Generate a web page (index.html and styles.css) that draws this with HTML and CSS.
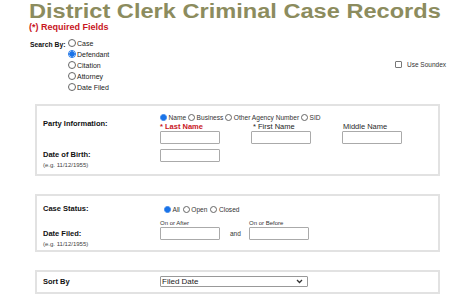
FILE: index.html
```html
<!DOCTYPE html>
<html>
<head>
<meta charset="utf-8">
<link rel="stylesheet" href="styles.css">
</head>
<body>
<div class="page">
  <h1 class="title"><span class="title-text">District Clerk Criminal Case Records</span></h1>
  <div class="req">(*) Required Fields</div>
  <div class="search">
    <div class="search-label">Search By:</div>
    <div class="search-opts">
      <label class="opt"><span class="radio"></span>Case</label>
      <label class="opt"><span class="radio on"></span>Defendant</label>
      <label class="opt"><span class="radio"></span>Citation</label>
      <label class="opt"><span class="radio"></span>Attorney</label>
      <label class="opt"><span class="radio"></span>Date Filed</label>
    </div>
    <label class="soundex"><span class="check"></span>Use Soundex</label>
  </div>

  <div class="box box1">
    <div class="row row-party">
      <div class="lbl">Party Information:</div>
      <div class="fields">
        <div class="radios">
          <label class="ropt"><span class="radio on"></span>Name</label>
          <label class="ropt"><span class="radio"></span>Business</label>
          <label class="ropt"><span class="radio"></span>Other Agency Number</label>
          <label class="ropt"><span class="radio"></span>SID</label>
        </div>
        <div class="names">
          <div class="fld f-last"><div class="flbl red">* Last Name</div><div class="inp"></div></div>
          <div class="fld f-first"><div class="flbl">* First Name</div><div class="inp"></div></div>
          <div class="fld f-mid"><div class="flbl"><span class="plain">Middle Name</span></div><div class="inp"></div></div>
        </div>
      </div>
    </div>
    <div class="row row-dob">
      <div class="lbl">Date of Birth:<div class="hint">(e.g. 11/12/1955)</div></div>
      <div class="fields"><div class="inp"></div></div>
    </div>
  </div>

  <div class="box box2">
    <div class="row row-status">
      <div class="lbl">Case Status:</div>
      <div class="radios">
        <label class="ropt"><span class="radio on"></span>All</label>
        <label class="ropt"><span class="radio"></span>Open</label>
        <label class="ropt"><span class="radio"></span>Closed</label>
      </div>
    </div>
    <div class="row row-filed">
      <div class="lbl">Date Filed:<div class="hint">(e.g. 11/12/1955)</div></div>
      <div class="dates">
        <div class="fld"><div class="slbl">On or After</div><div class="inp"></div></div>
        <div class="and">and</div>
        <div class="fld"><div class="slbl">On or Before</div><div class="inp"></div></div>
      </div>
    </div>
  </div>

  <div class="box box3">
    <div class="row row-sort">
      <div class="lbl">Sort By</div>
      <div class="select"><span>Filed Date</span>
        <svg width="7" height="5" viewBox="0 0 7 5"><path d="M1 1 L3.5 3.5 L6 1" fill="none" stroke="#333" stroke-width="1.3"/></svg>
      </div>
    </div>
  </div>
</div>
</body>
</html>
```

FILE: styles.css
```css
* { box-sizing: border-box; }
body {
  margin: 0;
  font-family: "Liberation Sans", Arial, sans-serif;
  color: #111;
  background: #fff;
  overflow: hidden;
}
.page { padding: 0 0 0 29px; width: 474px; }
.title {
  margin: 0;
  height: 22px;
  font-size: 20px;
  line-height: 22px;
  font-weight: bold;
  color: #8c8c5e;
  white-space: nowrap;
}
.title-text {
  display: inline-block;
  transform: scaleX(1.18);
  transform-origin: left center;
}
.req {
  margin-top: -1px;
  font-size: 9px;
  line-height: 12px;
  font-weight: bold;
  color: #c8161e;
}
.search {
  display: flex;
  margin-top: 5px;
  height: 65px;
  position: relative;
}
.search-label {
  width: 39px;
  padding-left: 1px;
  font-size: 6.8px;
  font-weight: bold;
  line-height: 11px;
  padding-top: 1px;
}
.search-opts { display: flex; flex-direction: column; }
.opt {
  display: flex;
  align-items: center;
  height: 11px;
  font-size: 7px;
  color: #222;
}
.radio {
  display: inline-block;
  width: 8px;
  height: 8px;
  border: 1px solid #666;
  border-radius: 50%;
  margin-right: 1px;
  background: #fff;
  flex: none;
}
.radio.on {
  border-color: #1a73e8;
  background: radial-gradient(circle, #1a73e8 0 2.5px, #fff 2.8px 100%);
}
.opt .radio { margin-right: 1px; position: relative; top: -1px; }
.soundex {
  position: absolute;
  left: 366px;
  top: 23px;
  display: flex;
  align-items: center;
  font-size: 6.5px;
  color: #333;
}
.check {
  width: 7px;
  height: 7px;
  border: 1px solid #777;
  border-radius: 1px;
  margin-right: 5px;
}
.box {
  width: 405px;
  margin-left: 6px;
  border: 2px solid #e2e2e2;
  padding: 0 0 0 6px;
}
.box1 { margin-top: 1px; height: 72px; }
.box2 { margin-top: 18px; height: 58px; }
.box3 { margin-top: 18px; height: 24px; }
.row { display: flex; }
.lbl {
  width: 117px;
  flex: none;
  font-size: 7.5px;
  font-weight: bold;
  line-height: 10px;
  color: #111;
}
.hint {
  font-size: 6px;
  font-weight: normal;
  color: #444;
  line-height: 10px;
}
.row-party { padding-top: 7px; }
.row-party .lbl { padding-top: 6px; }
.radios { display: flex; align-items: center; height: 9px; }
.ropt {
  display: flex;
  align-items: center;
  font-size: 6.6px;
  color: #333;
  margin-right: 2px;
}
.ropt .radio { width: 7px; height: 7px; margin-right: 1.5px; }
.names { display: flex; }
.fld { display: flex; flex-direction: column; }
.flbl {
  font-size: 7.5px;
  line-height: 9px;
  height: 9px;
  color: #222222;
}
.flbl.red { color: #c8161e; font-weight: bold; }
.f-first .flbl { padding-left: 2px; }
.plain { color: #2a2a2a; }
.inp {
  width: 60px;
  height: 13px;
  border: 1px solid #aaa;
  border-radius: 1px;
  background: #fff;
}
.f-last { margin-right: 31px; }
.f-first { margin-right: 31px; }
.f-mid .flbl { padding-left: 1px; }
.row-dob { margin-top: 5px; }
.row-dob .lbl { padding-top: 1px; }
.row-status { padding-top: 8px; align-items: center; }
.row-status .radios { margin-left: 4px; }
.row-status .ropt { margin-right: 3px; }
.row-filed { margin-top: 5px; }
.row-filed .lbl { padding-top: 10px; }
.dates { display: flex; align-items: flex-end; align-self: flex-start; }
.slbl { font-size: 6px; line-height: 8px; color: #333; }
.and { font-size: 6.5px; color: #333; width: 29px; padding-left: 10px; line-height: 13px; }
.row-sort { align-items: center; padding-top: 4px; }
.row-sort .lbl { padding-top: 1px; }
.select {
  width: 148px;
  height: 11px;
  border: 1px solid #999;
  border-radius: 1px;
  display: flex;
  align-items: center;
  justify-content: space-between;
  padding: 0 4px 0 1px;
  font-size: 8px;
  color: #222;
}
```
